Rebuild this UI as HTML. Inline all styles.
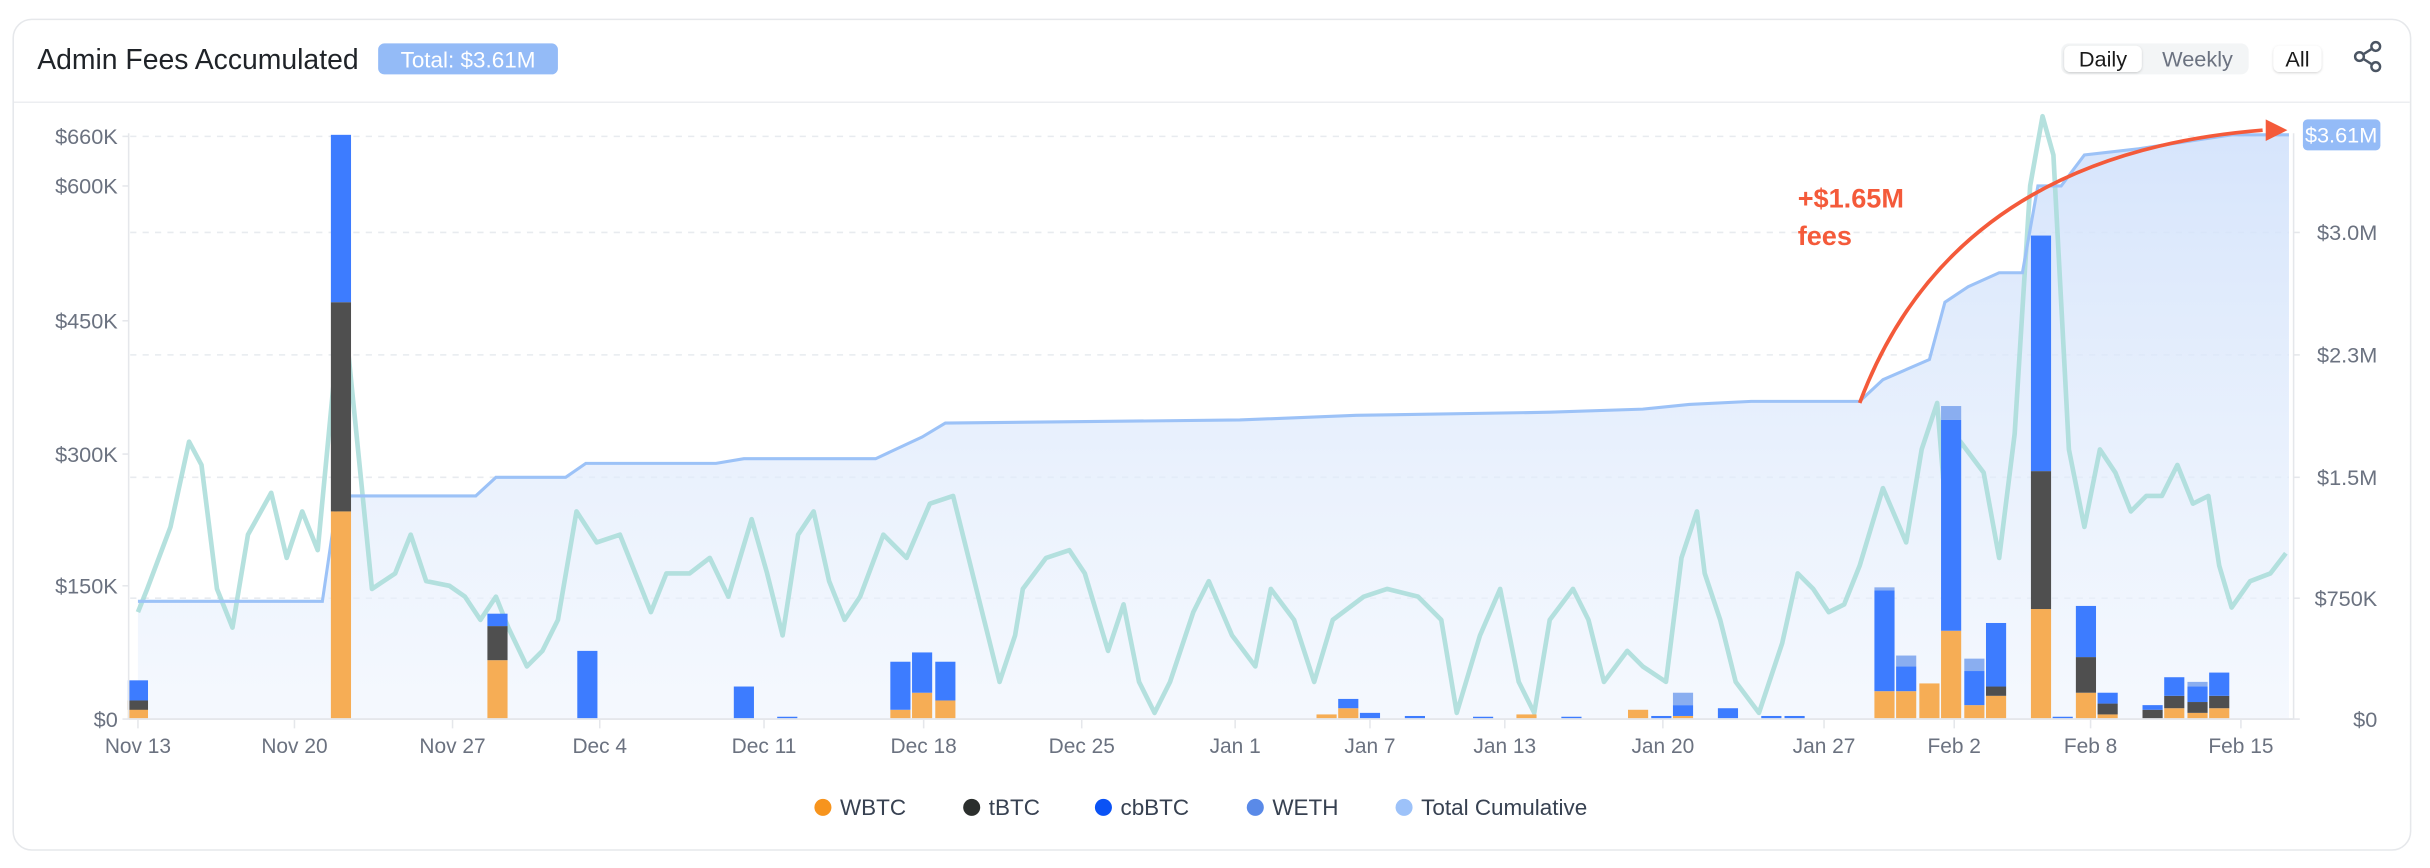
<!DOCTYPE html>
<html><head><meta charset="utf-8"><style>
html,body{margin:0;padding:0;background:#fff;width:2430px;height:868px;overflow:hidden}
svg{display:block;font-family:"Liberation Sans",sans-serif}
</style></head><body>
<svg width="2430" height="868" viewBox="0 0 1568 560.1" xmlns="http://www.w3.org/2000/svg">
<defs>
<linearGradient id="ag" x1="0" y1="0" x2="0" y2="1">
<stop offset="0" stop-color="#cfe0fb" stop-opacity="0.85"/>
<stop offset="1" stop-color="#eef4fd" stop-opacity="0.6"/>
</linearGradient>
<filter id="sh" x="-20%" y="-30%" width="140%" height="160%"><feDropShadow dx="0" dy="0.6" stdDeviation="0.8" flood-color="#000" flood-opacity="0.18"/></filter>
</defs>
<rect x="8.5" y="12.5" width="1547" height="536" rx="12" fill="#fff" stroke="#e6e8eb"/>
<line x1="9" y1="66" x2="1555" y2="66" stroke="#eceef1"/>
<text x="24" y="44.5" font-size="18.3" fill="#1f2328">Admin Fees Accumulated</text>
<rect x="244" y="28" width="116" height="20" rx="4" fill="#94bbf7"/>
<text x="302" y="43.5" font-size="14.5" fill="#fff" text-anchor="middle">Total: $3.61M</text>
<rect x="1330" y="28" width="121" height="20" rx="5" fill="#f3f5f6"/>
<rect x="1332" y="29.5" width="50" height="17" rx="4" fill="#fff" filter="url(#sh)"/>
<text x="1357" y="43" font-size="14" fill="#1a1a1a" text-anchor="middle">Daily</text>
<text x="1418" y="43" font-size="14" fill="#6b7280" text-anchor="middle">Weekly</text>
<rect x="1467" y="29.5" width="31" height="17" rx="4" fill="#fff" filter="url(#sh)"/>
<text x="1482.5" y="43" font-size="14" fill="#1a1a1a" text-anchor="middle">All</text>
<g stroke="#4b5563" stroke-width="1.6" fill="none"><circle cx="1533" cy="30" r="2.8"/><circle cx="1522.5" cy="36.5" r="2.8"/><circle cx="1533" cy="43" r="2.8"/><line x1="1525" y1="35" x2="1530.5" y2="31.5"/><line x1="1525" y1="38" x2="1530.5" y2="41.5"/></g>
<g stroke="#e8ebef" stroke-dasharray="4 4"><line x1="84" y1="88" x2="1477" y2="88"/><line x1="84" y1="150" x2="1477" y2="150"/><line x1="84" y1="229" x2="1477" y2="229"/><line x1="84" y1="308" x2="1477" y2="308"/><line x1="84" y1="386" x2="1477" y2="386"/></g>
<polygon fill="url(#ag)" points="89,464 89,388 208,388 218,320 307,320 320,308 365,308 378,299 462,299 480,296 565,296 595,282 610,273 800,271 875,268 1000,266 1060,264 1090,261 1130,259 1200,259 1215,245 1245,232 1255,195 1270,185 1290,176 1305,176 1315,120 1330,120 1345,100 1380,96 1420,90 1440,87 1477,87 1477,464"/>
<polyline fill="none" stroke="#a8dcd8" stroke-width="3" stroke-linejoin="round" opacity="0.85" points="89,395 95,380 110,340 122,285 130,300 140,380 150,405 160,345 175,318 185,360 195,330 205,355 215,250 225,230 232,300 240,380 255,370 265,345 275,375 290,378 300,385 310,400 320,385 328,405 340,430 350,420 360,400 372,330 385,350 400,345 410,370 420,395 430,370 445,370 458,360 470,385 485,335 495,370 505,410 515,345 525,330 535,375 545,400 555,385 570,345 585,360 600,325 615,320 625,360 635,400 645,440 655,410 660,380 675,360 690,355 700,370 715,420 725,390 735,440 745,460 755,440 770,395 780,375 795,410 810,430 820,380 835,400 848,440 860,400 880,385 895,380 915,385 930,400 940,460 955,410 968,380 980,440 990,460 1000,400 1015,380 1025,400 1035,440 1050,420 1060,430 1075,440 1085,360 1095,330 1100,370 1110,400 1120,440 1135,460 1150,415 1160,370 1170,380 1180,395 1190,390 1200,365 1215,315 1230,350 1240,290 1250,260 1256,335 1265,285 1280,305 1290,360 1300,280 1310,120 1318,75 1325,100 1335,290 1345,340 1355,290 1365,305 1375,330 1385,320 1395,320 1405,300 1415,325 1425,320 1432,365 1440,392 1452,375 1465,370 1475,357"/>
<polyline fill="none" stroke="#9cc2f7" stroke-width="2" points="89,388 208,388 218,320 307,320 320,308 365,308 378,299 462,299 480,296 565,296 595,282 610,273 800,271 875,268 1000,266 1060,264 1090,261 1130,259 1200,259 1215,245 1245,232 1255,195 1270,185 1290,176 1305,176 1315,120 1330,120 1345,100 1380,96 1420,90 1440,87 1477,87"/>
<g>
<rect x="82.5" y="452" width="13" height="12" fill="#f6ad55"/><rect x="82.5" y="452" width="13" height="6" fill="#4f4f4f"/><rect x="82.5" y="439" width="13" height="13" fill="#3d7cff"/>
<rect x="213.5" y="330" width="13" height="134" fill="#f6ad55"/><rect x="213.5" y="195" width="13" height="135" fill="#4f4f4f"/><rect x="213.5" y="87" width="13" height="108" fill="#3d7cff"/>
<rect x="314.5" y="426" width="13" height="38" fill="#f6ad55"/><rect x="314.5" y="404" width="13" height="22" fill="#4f4f4f"/><rect x="314.5" y="396" width="13" height="8" fill="#3d7cff"/>
<rect x="372.5" y="420" width="13" height="44" fill="#3d7cff"/>
<rect x="473.5" y="443" width="13" height="21" fill="#3d7cff"/>
<rect x="501.5" y="462.5" width="13" height="1.5" fill="#3d7cff"/>
<rect x="574.5" y="458" width="13" height="6" fill="#f6ad55"/><rect x="574.5" y="427" width="13" height="31" fill="#3d7cff"/>
<rect x="588.5" y="447" width="13" height="17" fill="#f6ad55"/><rect x="588.5" y="421" width="13" height="26" fill="#3d7cff"/>
<rect x="603.5" y="452" width="13" height="12" fill="#f6ad55"/><rect x="603.5" y="427" width="13" height="25" fill="#3d7cff"/>
<rect x="849.5" y="461" width="13" height="3" fill="#f6ad55"/>
<rect x="863.5" y="457" width="13" height="7" fill="#f6ad55"/><rect x="863.5" y="451" width="13" height="6" fill="#3d7cff"/>
<rect x="877.5" y="460" width="13" height="4" fill="#3d7cff"/>
<rect x="906.5" y="462" width="13" height="2" fill="#3d7cff"/>
<rect x="950.5" y="462.5" width="13" height="1.5" fill="#3d7cff"/>
<rect x="978.5" y="461" width="13" height="3" fill="#f6ad55"/>
<rect x="1007.5" y="462.5" width="13" height="1.5" fill="#3d7cff"/>
<rect x="1050.5" y="458" width="13" height="6" fill="#f6ad55"/>
<rect x="1065.5" y="462" width="13" height="2" fill="#3d7cff"/>
<rect x="1079.5" y="462" width="13" height="2" fill="#f6ad55"/><rect x="1079.5" y="455" width="13" height="7" fill="#3d7cff"/><rect x="1079.5" y="447" width="13" height="8" fill="#8aaef0"/>
<rect x="1108.5" y="457" width="13" height="7" fill="#3d7cff"/>
<rect x="1136.5" y="462" width="13" height="2" fill="#3d7cff"/><rect x="1151.5" y="462" width="13" height="2" fill="#3d7cff"/>
<rect x="1209.5" y="446" width="13" height="18" fill="#f6ad55"/><rect x="1209.5" y="381" width="13" height="65" fill="#3d7cff"/><rect x="1209.5" y="379" width="13" height="2" fill="#8aaef0"/>
<rect x="1223.5" y="446" width="13" height="18" fill="#f6ad55"/><rect x="1223.5" y="430" width="13" height="16" fill="#3d7cff"/><rect x="1223.5" y="423" width="13" height="7" fill="#8aaef0"/>
<rect x="1238.5" y="441" width="13" height="23" fill="#f6ad55"/>
<rect x="1252.5" y="407" width="13" height="57" fill="#f6ad55"/><rect x="1252.5" y="271" width="13" height="136" fill="#3d7cff"/><rect x="1252.5" y="262" width="13" height="9" fill="#8aaef0"/>
<rect x="1267.5" y="455" width="13" height="9" fill="#f6ad55"/><rect x="1267.5" y="433" width="13" height="22" fill="#3d7cff"/><rect x="1267.5" y="425" width="13" height="8" fill="#8aaef0"/>
<rect x="1281.5" y="449" width="13" height="15" fill="#f6ad55"/><rect x="1281.5" y="443" width="13" height="6" fill="#4f4f4f"/><rect x="1281.5" y="402" width="13" height="41" fill="#3d7cff"/>
<rect x="1310.5" y="393" width="13" height="71" fill="#f6ad55"/><rect x="1310.5" y="304" width="13" height="89" fill="#4f4f4f"/><rect x="1310.5" y="152" width="13" height="152" fill="#3d7cff"/>
<rect x="1324.5" y="462.5" width="13" height="1.5" fill="#3d7cff"/>
<rect x="1339.5" y="447" width="13" height="17" fill="#f6ad55"/><rect x="1339.5" y="424" width="13" height="23" fill="#4f4f4f"/><rect x="1339.5" y="391" width="13" height="33" fill="#3d7cff"/>
<rect x="1353.5" y="461" width="13" height="3" fill="#f6ad55"/><rect x="1353.5" y="454" width="13" height="7" fill="#4f4f4f"/><rect x="1353.5" y="447" width="13" height="7" fill="#3d7cff"/>
<rect x="1382.5" y="458" width="13" height="6" fill="#4f4f4f"/><rect x="1382.5" y="455" width="13" height="3" fill="#3d7cff"/>
<rect x="1396.5" y="457" width="13" height="7" fill="#f6ad55"/><rect x="1396.5" y="449" width="13" height="8" fill="#4f4f4f"/><rect x="1396.5" y="437" width="13" height="12" fill="#3d7cff"/>
<rect x="1411.5" y="460" width="13" height="4" fill="#f6ad55"/><rect x="1411.5" y="453" width="13" height="7" fill="#4f4f4f"/><rect x="1411.5" y="443" width="13" height="10" fill="#3d7cff"/><rect x="1411.5" y="440" width="13" height="3" fill="#8aaef0"/>
<rect x="1425.5" y="457" width="13" height="7" fill="#f6ad55"/><rect x="1425.5" y="449" width="13" height="8" fill="#4f4f4f"/><rect x="1425.5" y="434" width="13" height="15" fill="#3d7cff"/>
</g>
<line x1="83" y1="86" x2="83" y2="464" stroke="#e5e7eb"/>
<line x1="83" y1="464" x2="1480" y2="464" stroke="#e5e7eb" stroke-width="1.2"/>
<line x1="1480" y1="86" x2="1480" y2="464" stroke="#e5e7eb"/>
<g stroke="#e5e7eb"><line x1="79" y1="88" x2="83" y2="88"/><line x1="79" y1="120" x2="83" y2="120"/><line x1="79" y1="207" x2="83" y2="207"/><line x1="79" y1="293" x2="83" y2="293"/><line x1="79" y1="378" x2="83" y2="378"/><line x1="79" y1="464" x2="83" y2="464"/>
<line x1="1480" y1="150" x2="1484" y2="150"/><line x1="1480" y1="229" x2="1484" y2="229"/><line x1="1480" y1="308" x2="1484" y2="308"/><line x1="1480" y1="386" x2="1484" y2="386"/><line x1="1480" y1="464" x2="1484" y2="464"/>
<line x1="89" y1="464" x2="89" y2="470"/><line x1="190" y1="464" x2="190" y2="470"/><line x1="292" y1="464" x2="292" y2="470"/><line x1="387" y1="464" x2="387" y2="470"/><line x1="493" y1="464" x2="493" y2="470"/><line x1="596" y1="464" x2="596" y2="470"/><line x1="698" y1="464" x2="698" y2="470"/><line x1="797" y1="464" x2="797" y2="470"/><line x1="884" y1="464" x2="884" y2="470"/><line x1="971" y1="464" x2="971" y2="470"/><line x1="1073" y1="464" x2="1073" y2="470"/><line x1="1177" y1="464" x2="1177" y2="470"/><line x1="1261" y1="464" x2="1261" y2="470"/><line x1="1349" y1="464" x2="1349" y2="470"/><line x1="1446" y1="464" x2="1446" y2="470"/></g>
<g font-size="14" fill="#6b7280" text-anchor="end"><text x="76" y="93">$660K</text><text x="76" y="125">$600K</text><text x="76" y="212">$450K</text><text x="76" y="298">$300K</text><text x="76" y="383">$150K</text><text x="76" y="469">$0</text></g>
<rect x="1486" y="77" width="50" height="20" rx="3" fill="#94bbf7"/>
<g font-size="14" fill="#6b7280" text-anchor="end"><text x="1534" y="92" fill="#fff">$3.61M</text><text x="1534" y="155">$3.0M</text><text x="1534" y="234">$2.3M</text><text x="1534" y="313">$1.5M</text><text x="1534" y="391">$750K</text><text x="1534" y="469">$0</text></g>
<g font-size="13.5" fill="#6b7280" text-anchor="middle"><text x="89" y="486">Nov 13</text><text x="190" y="486">Nov 20</text><text x="292" y="486">Nov 27</text><text x="387" y="486">Dec 4</text><text x="493" y="486">Dec 11</text><text x="596" y="486">Dec 18</text><text x="698" y="486">Dec 25</text><text x="797" y="486">Jan 1</text><text x="884" y="486">Jan 7</text><text x="971" y="486">Jan 13</text><text x="1073" y="486">Jan 20</text><text x="1177" y="486">Jan 27</text><text x="1261" y="486">Feb 2</text><text x="1349" y="486">Feb 8</text><text x="1446" y="486">Feb 15</text></g>
<path d="M1200,260 Q1260,100 1460,84" fill="none" stroke="#f45a3a" stroke-width="2.4"/>
<polygon points="1476,84 1462,77 1462,91" fill="#f45a3a"/>
<g font-size="17.5" font-weight="bold" fill="#f45a3a"><text x="1160" y="134">+$1.65M</text><text x="1160" y="158">fees</text></g>
<g font-size="14.5" fill="#374151">
<circle cx="531" cy="521" r="5.5" fill="#f7941d"/><text x="542" y="526">WBTC</text>
<circle cx="627" cy="521" r="5.5" fill="#2b2f2d"/><text x="638" y="526">tBTC</text>
<circle cx="712" cy="521" r="5.5" fill="#0a52f5"/><text x="723" y="526">cbBTC</text>
<circle cx="810" cy="521" r="5.5" fill="#5a8ae8"/><text x="821" y="526">WETH</text>
<circle cx="906" cy="521" r="5.5" fill="#9dc2f9"/><text x="917" y="526">Total Cumulative</text>
</g>
</svg>
</body></html>
